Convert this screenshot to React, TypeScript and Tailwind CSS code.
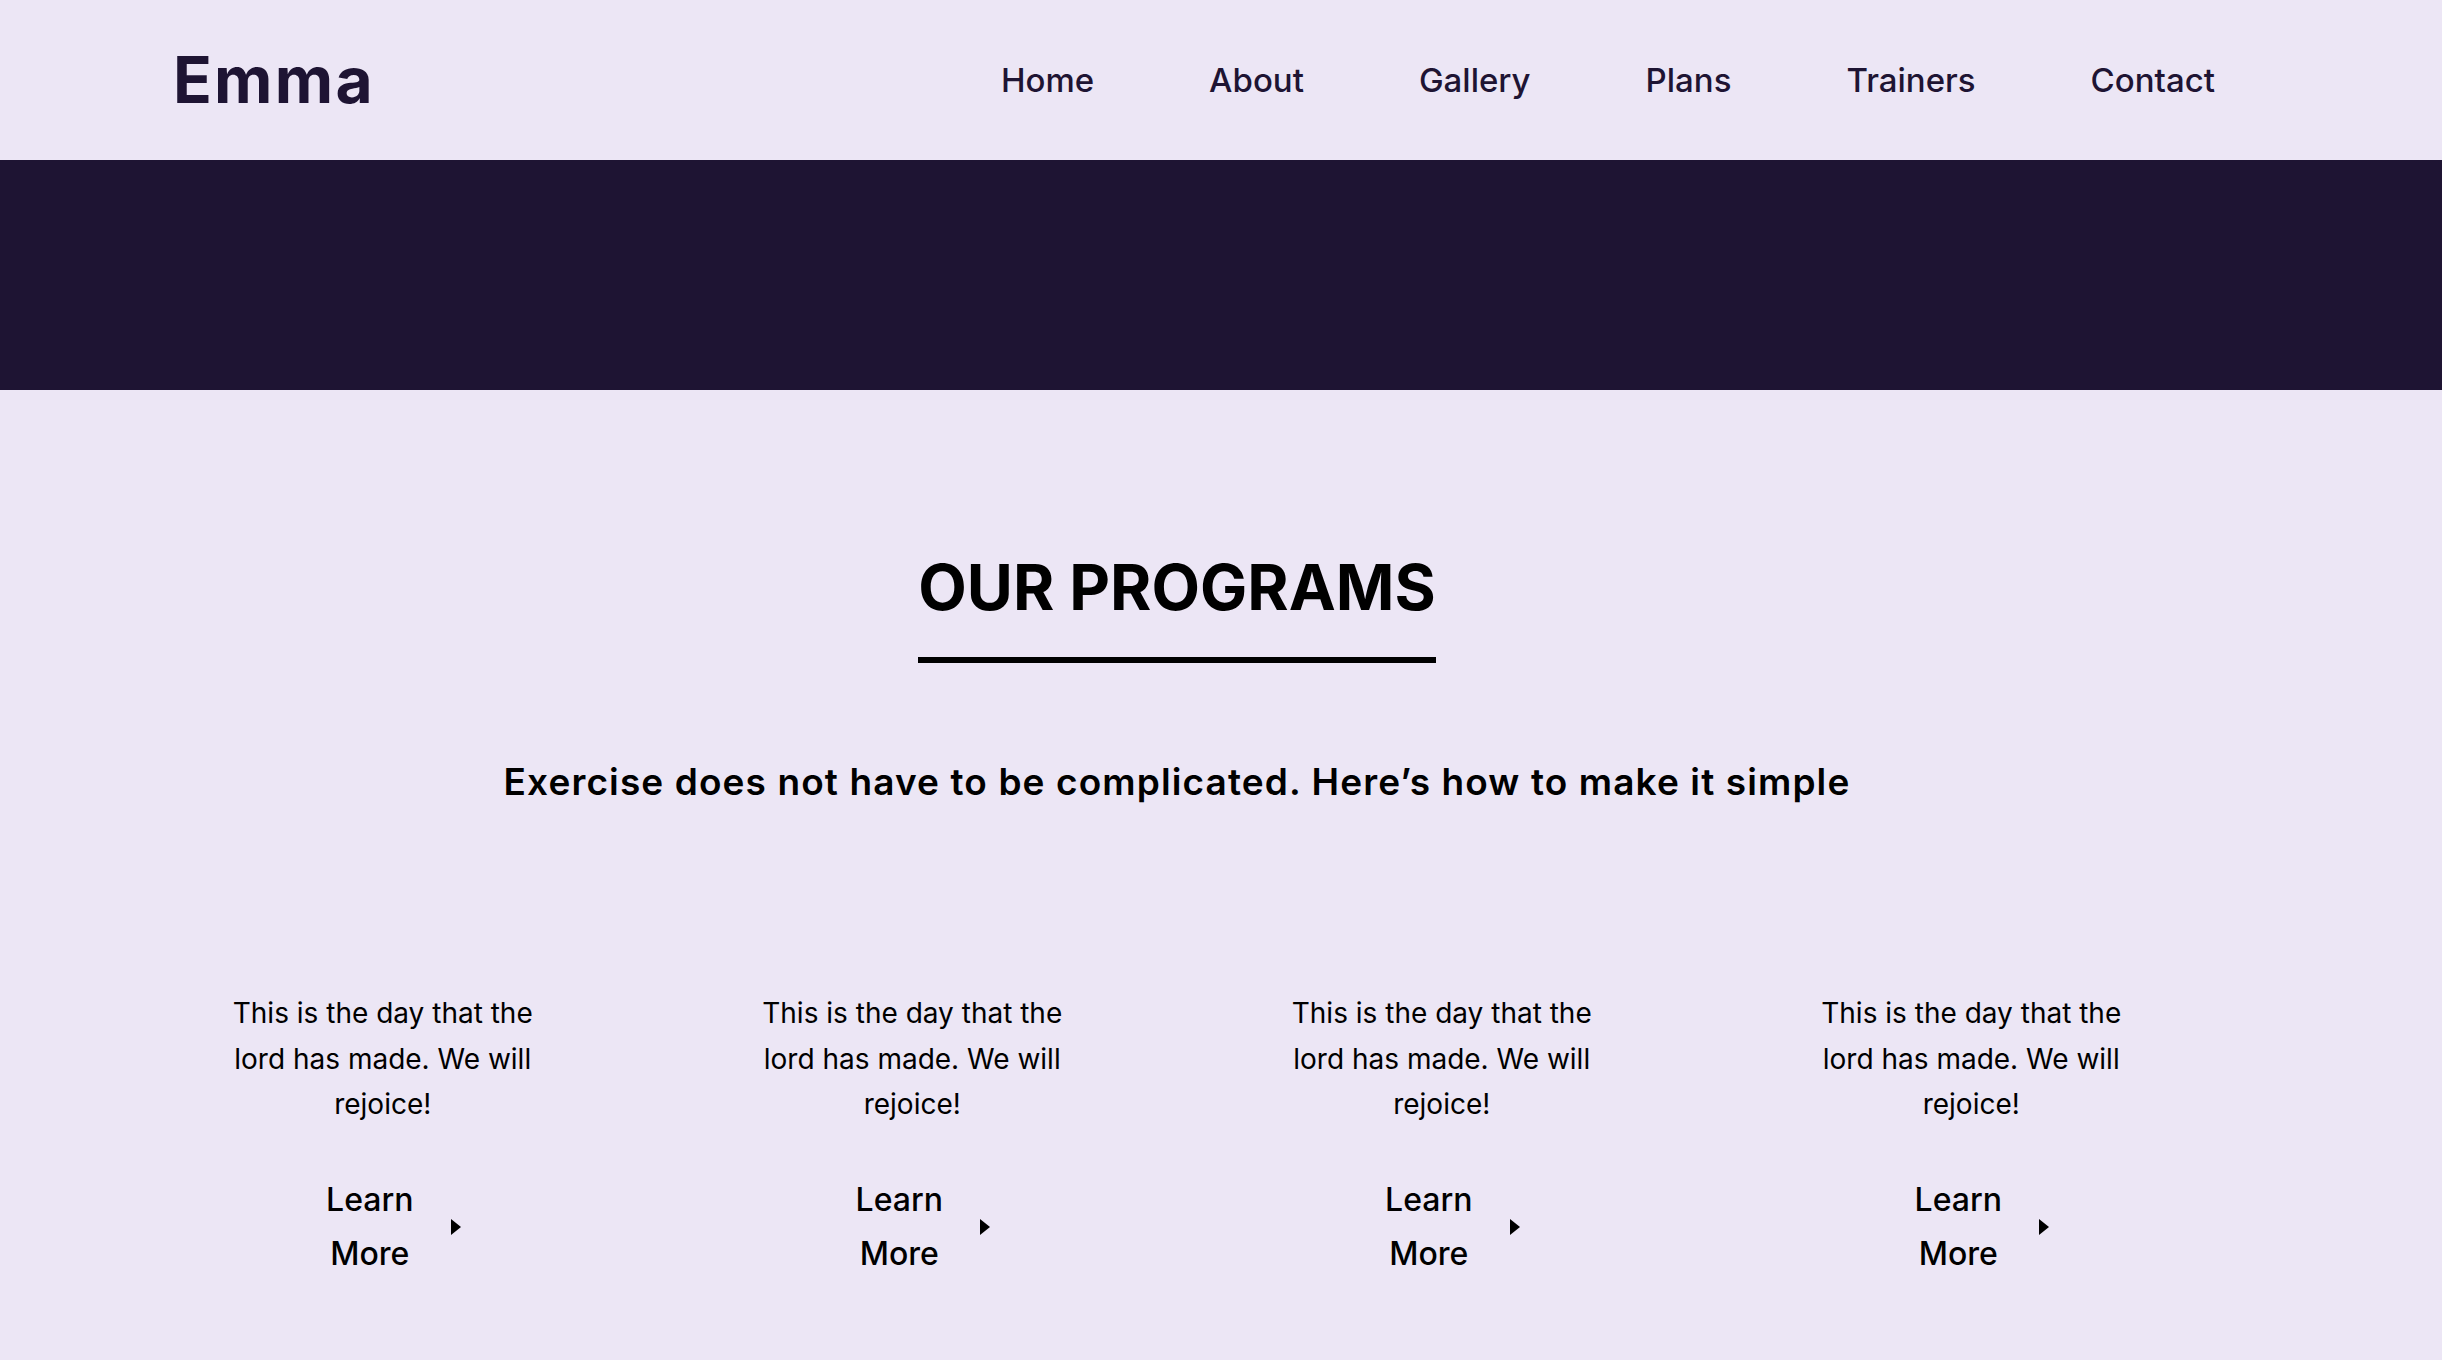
const NAV = ['Home', 'About', 'Gallery', 'Plans', 'Trainers', 'Contact'];

const PROGRAMS = [1, 2, 3, 4];

export default function App() {
  return (
    <div
      className="min-h-screen bg-[#ECE6F5] text-black"
      style={{ fontFamily: 'Inter, "Noto Sans", sans-serif' }}
    >
      {/* Header */}
      <header className="h-[160px] flex items-center justify-between pl-[173px] pr-[227px]">
        <div className="text-[64px] font-bold leading-none text-[#1E1433] tracking-[0.035em]">Emma</div>
        <nav className="flex gap-[115px]">
          {NAV.map((item) => (
            <a key={item} href="#" className="text-[33px] font-medium leading-none text-[#1E1433]">
              {item}
            </a>
          ))}
        </nav>
      </header>

      {/* Hero band */}
      <div className="h-[230px] bg-[#1E1433]" />

      {/* Programs */}
      <section className="pl-[118px] pr-[206px] flex flex-col items-center pb-[80px]">
        <h2 className="mt-[166px] text-[63px] font-bold leading-none pb-[38px] border-b-[6px] border-black">
          OUR PROGRAMS
        </h2>
        <p className="mt-[100px] text-[37px] font-semibold leading-none tracking-[0.03em]">
          Exercise does not have to be complicated. Here’s how to make it simple
        </p>

        <div className="w-full grid grid-cols-4 mt-[191px]">
          {PROGRAMS.map((n) => (
            <div key={n} className="flex flex-col items-center">
              <p className="w-[340px] text-center text-[28px] leading-[45.5px]">
                This is the day that the
                <br />
                lord has made. We will
                <br />
                rejoice!
              </p>
              <a href="#" className="mt-[45px] flex items-center gap-[16px]">
                <span className="w-[130px] text-center text-[32px] font-medium leading-[54px]">Learn More</span>
                <svg width="10" height="16" viewBox="0 0 10 16" className="fill-black">
                  <path d="M0 0 L10 8 L0 16 Z" />
                </svg>
              </a>
            </div>
          ))}
        </div>
      </section>
    </div>
  );
}
